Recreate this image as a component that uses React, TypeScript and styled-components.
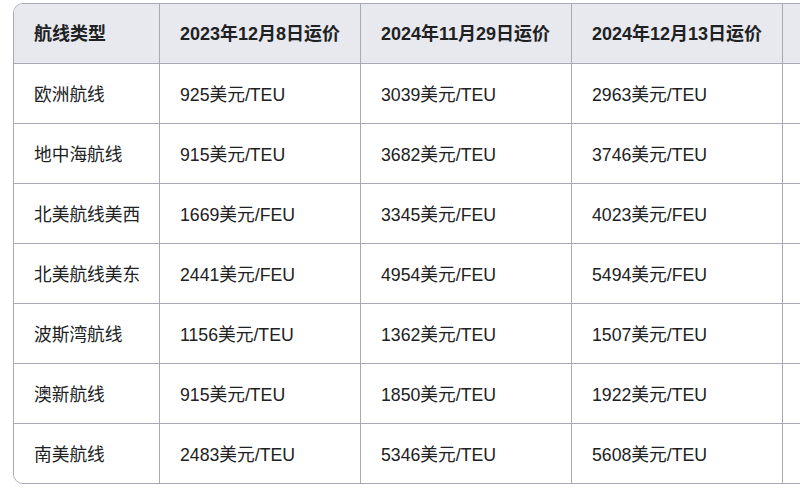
import React from "react";
import styled, { createGlobalStyle } from "styled-components";

const GlobalStyle = createGlobalStyle`
  html, body {
    margin: 0;
    padding: 0;
    background: #ffffff;
    overflow: hidden;
  }
  body {
    font-family: "Liberation Sans", Arial, "Noto Sans CJK SC", sans-serif;
    color: #202122;
  }
`;

const Page = styled.div`
  width: 800px;
  height: 488px;
  overflow: hidden;
  padding: 3px 0 0 13px;
  box-sizing: border-box;
`;

const Frame = styled.div`
  display: inline-block;
  border: 1px solid #a7a9b5;
  border-radius: 10px;
  overflow: hidden;
  background: #ffffff;
`;

const Grid = styled.div`
  display: grid;
  grid-template-columns: 146px 201px 211px 211px 211px;
  grid-auto-rows: auto;
`;

const Cell = styled.div<{ $header?: boolean; $last?: boolean }>`
  box-sizing: border-box;
  height: ${(p) => (p.$header ? "59px" : "60px")};
  display: flex;
  align-items: center;
  padding: ${(p) => (p.$header ? "0 0 3px 20px" : "0 0 2px 20px")};
  font-size: ${(p) => (p.$header ? "18px" : "17.7px")};
  font-weight: ${(p) => (p.$header ? 700 : 400)};
  background: ${(p) => (p.$header ? "#e8e9ee" : "#ffffff")};
  border-top: ${(p) => (p.$header ? "none" : "1px solid #a7a9b5")};
  border-right: ${(p) => (p.$last ? "none" : "1px solid #a7a9b5")};
  white-space: nowrap;
`;

const headers = [
  "航线类型",
  "2023年12月8日运价",
  "2024年11月29日运价",
  "2024年12月13日运价",
  "环比涨跌幅",
];

const rows: string[][] = [
  ["欧洲航线", "925美元/TEU", "3039美元/TEU", "2963美元/TEU", "-2.5%"],
  ["地中海航线", "915美元/TEU", "3682美元/TEU", "3746美元/TEU", "1.7%"],
  ["北美航线美西", "1669美元/FEU", "3345美元/FEU", "4023美元/FEU", "20.3%"],
  ["北美航线美东", "2441美元/FEU", "4954美元/FEU", "5494美元/FEU", "10.9%"],
  ["波斯湾航线", "1156美元/TEU", "1362美元/TEU", "1507美元/TEU", "10.6%"],
  ["澳新航线", "915美元/TEU", "1850美元/TEU", "1922美元/TEU", "3.9%"],
  ["南美航线", "2483美元/TEU", "5346美元/TEU", "5608美元/TEU", "4.9%"],
];

export default function App() {
  return (
    <>
      <GlobalStyle />
      <Page>
        <Frame>
          <Grid>
            {headers.map((h, i) => (
              <Cell key={h} $header $last={i === headers.length - 1}>
                {h}
              </Cell>
            ))}
            {rows.map((r) =>
              r.map((c, i) => (
                <Cell key={r[0] + i} $last={i === r.length - 1}>
                  {c}
                </Cell>
              ))
            )}
          </Grid>
        </Frame>
      </Page>
    </>
  );
}
